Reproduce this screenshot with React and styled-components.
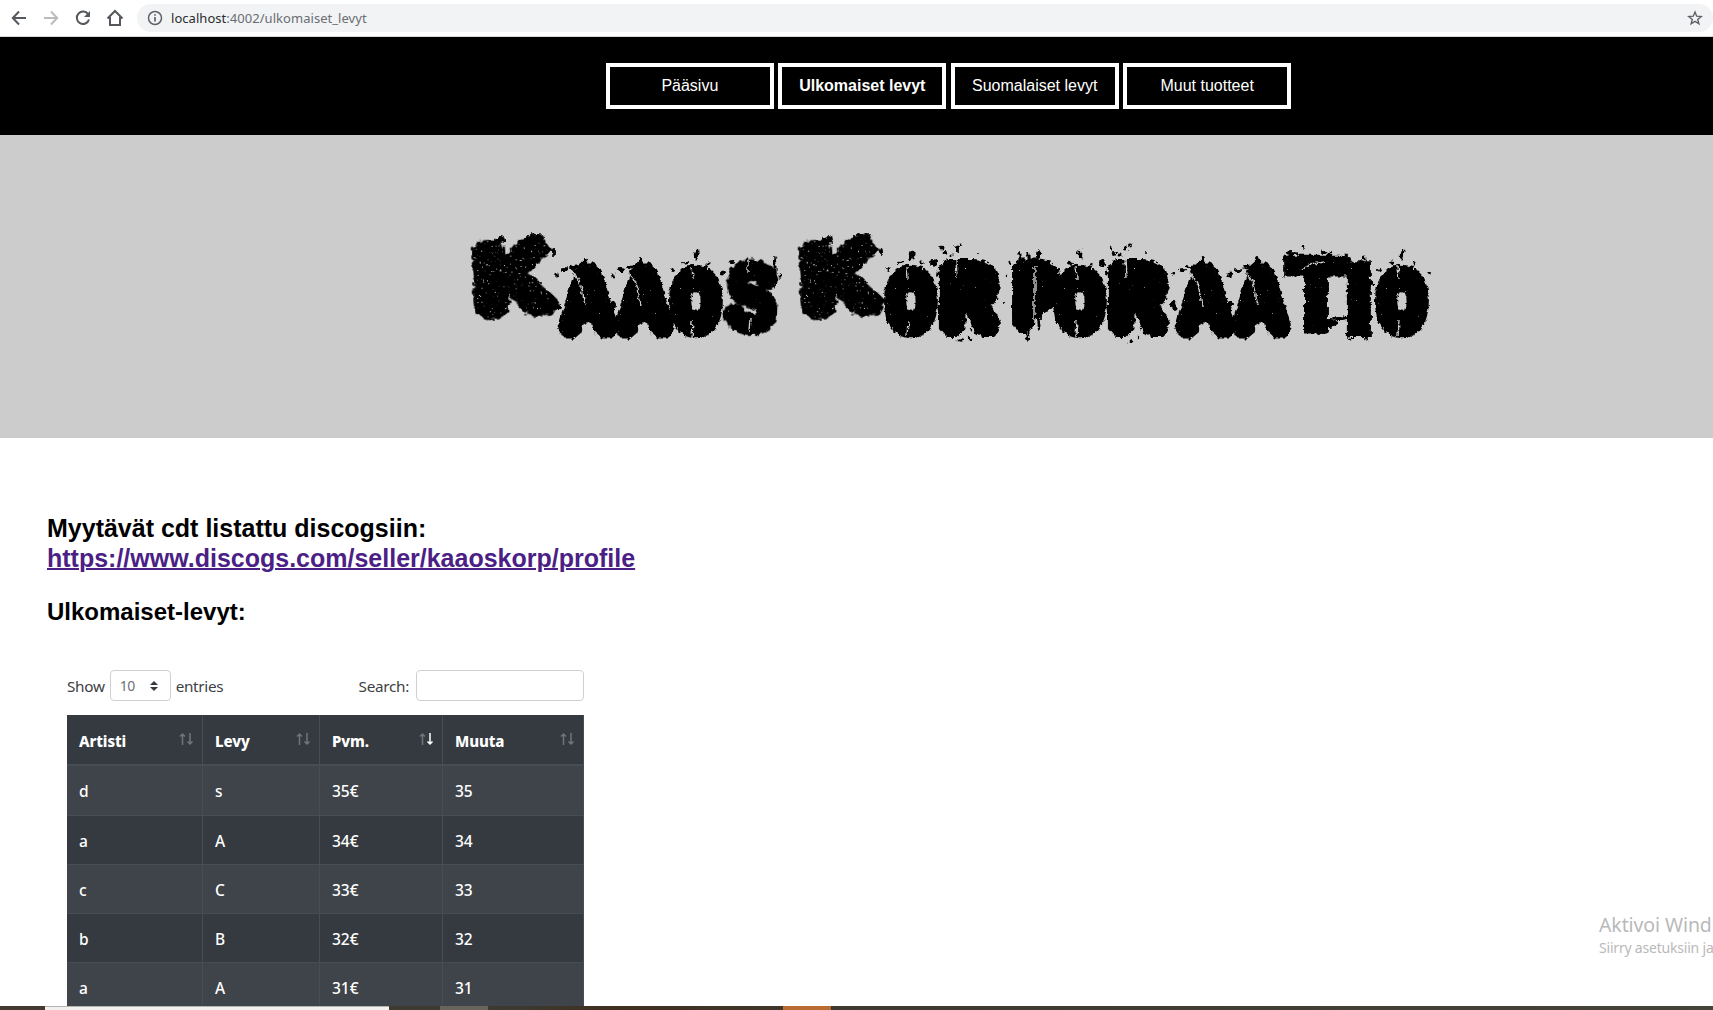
import React from "react";
import styled, { createGlobalStyle } from "styled-components";

const Global = createGlobalStyle`
  * { box-sizing: border-box; }
  html, body { margin: 0; background: #fff; overflow: hidden; }
`;

const sans = `"Noto Sans", "Open Sans", sans-serif`;
const arial = `"Liberation Sans", Arial, sans-serif`;

const Screen = styled.div`
  position: relative;
  display: flex;
  flex-direction: column;
  width: 1713px;
  height: 1010px;
  overflow: hidden;
  background: #fff;
`;

const Toolbar = styled.header`
  display: flex;
  align-items: center;
  flex: none;
  height: 37px;
  padding: 0 0 1px 7px;
  border-bottom: 1px solid #d5d7d9;
`;

const ToolButton = styled.span`
  display: flex;
  justify-content: center;
  flex: none;
  width: 24px;
  margin-right: 8px;
  color: ${(p) => (p.$off ? "#b9bbbd" : "#55585c")};
  svg { display: block; }
`;

const AddressBar = styled.div`
  display: flex;
  align-items: center;
  flex: 1;
  height: 28px;
  margin-left: 2px;
  padding: 0 10px;
  border-radius: 14px;
  background: #f1f3f4;
  color: #5f6368;
`;

const Url = styled.span`
  flex: 1;
  margin-left: 8px;
  font: 13px ${sans};
  letter-spacing: 0.04px;
  color: #6a6e73;
  b { font-weight: 400; color: #2b2d30; }
`;

const Page = styled.div`
  flex: none;
  width: 1897px;
`;

const Nav = styled.nav`
  display: flex;
  align-items: center;
  justify-content: center;
  gap: 4.45px;
  height: 98px;
  background: #000;
`;

const NavItem = styled.a`
  display: flex;
  align-items: center;
  justify-content: center;
  width: 168px;
  height: 46px;
  border: 4px solid #fff;
  color: #fff;
  font: ${(p) => (p.$active ? 700 : 400)} 16px ${arial};
`;

const Banner = styled.div`
  display: flex;
  justify-content: center;
  height: 303px;
  padding-top: 85px;
  background: #ccc;
`;

const Main = styled.main`
  padding: 75px 0 0 47px;
`;

const Heading = styled.h2`
  margin: 0 0 ${(p) => p.$gap}px;
  font: 700 ${(p) => p.$size}px/30px ${arial};
  color: #000;
  a { color: #4b1f85; text-decoration: underline; text-decoration-thickness: 2px; }
`;

const TableBox = styled.section`
  display: flex;
  flex-direction: column;
  width: 517px;
  margin-left: 20px;
  font: 16px ${sans};
  color: #212529;
`;

const Controls = styled.div`
  display: flex;
  align-items: center;
  justify-content: space-between;
  height: 31px;
  margin-bottom: 14px;
`;

const Label = styled.label`
  display: flex;
  align-items: center;
  gap: ${(p) => p.$gap}px;
  font-size: 15.3px;
  letter-spacing: -0.3px;
  color: #3d4145;
`;

const Select = styled.span`
  display: flex;
  align-items: center;
  justify-content: space-between;
  width: 61px;
  height: 31px;
  padding: 0 12px 0 9px;
  border: 1px solid #ced1d4;
  border-radius: 4px;
  font-size: 14px;
  color: #6b7278;
`;

const SearchBox = styled.input`
  width: 168px;
  height: 31px;
  border: 1px solid #ced1d4;
  border-radius: 4px;
  background: #fff;
`;

const Row = styled.div`
  display: grid;
  grid-template-columns: 136px 117px 123px 141px;
  height: ${(p) => p.$h}px;
  border-bottom: ${(p) => (p.$head ? 2 : 1)}px solid #454d55;
  background: ${(p) => (p.$odd ? "#3f444a" : "#343a40")};
`;

const Cell = styled.div`
  display: flex;
  align-items: center;
  justify-content: space-between;
  padding: ${(p) => (p.$head ? 2 : 1)}px 8px 0 12px;
  border-right: 1px solid #454d55;
  font-size: ${(p) => (p.$head ? 15 : 15.5)}px;
  font-weight: ${(p) => (p.$head ? 800 : 500)};
  letter-spacing: ${(p) => (p.$head ? -0.1 : 0)}px;
  color: #fff;
  svg { margin-bottom: 4px; }
`;

const Watermark = styled.aside`
  position: absolute;
  left: 1599px;
  top: 912px;
  white-space: nowrap;
  color: #b9b9b9;
  font-family: ${sans};
`;

const WatermarkTitle = styled.div`
  font-size: 19.5px;
  line-height: 26px;
  letter-spacing: -0.1px;
`;

const WatermarkText = styled.div`
  font-size: 14px;
  line-height: 20px;
  letter-spacing: -0.2px;
`;

const Taskbar = styled.footer`
  position: absolute;
  left: 0;
  bottom: 0;
  display: flex;
  width: 100%;
  height: 4px;
  padding-left: 45px;
  background: linear-gradient(90deg, #453a30, #3c3a30 30%, #40301f 36%, #3f392f 50%, #45443a);
`;

const Task = styled.span`
  flex: none;
  width: ${(p) => p.$w}px;
  margin-right: ${(p) => p.$gap || 0}px;
  background: ${(p) => p.$bg};
  border-top: ${(p) => (p.$line ? "1px solid #b4b4b0" : "none")};
`;

// Horizontal ink range of each bold capital, in percent of the font size.
const INK = {
  K: [6.7, 71.8], A: [1, 71.2], O: [4.1, 73.7], S: [3.1, 62.8],
  R: [6.7, 71], P: [6.7, 62.2], T: [2, 59], I: [6.7, 21.1],
};

// character, left, top, width, height, stroke, rotation
const KAAOS = [
  ["K", 14, 18, 86, 80, 19, -4],
  ["A", 97, 43, 64, 75, 20, 0],
  ["A", 153, 43, 64, 75, 20, 0],
  ["O", 210, 44, 54, 74, 24, 0],
  ["S", 265, 39, 54, 76, 14, 3],
];
const KORPORAATIO = [
  ["K", 341, 18, 86, 80, 19, -4],
  ["O", 425, 44, 54, 74, 24, 0],
  ["R", 480, 39, 64, 78, 21, 0],
  ["P", 553, 39, 48, 74, 24, 0],
  ["O", 594, 44, 54, 74, 24, 0],
  ["R", 649, 39, 64, 78, 21, 0],
  ["A", 714, 43, 64, 75, 20, 0],
  ["A", 770, 43, 64, 75, 20, 0],
  ["T", 825, 35, 64, 78, 11, 0],
  ["I", 888, 42, 24, 75, 8, 0],
  ["O", 916, 44, 54, 74, 24, 0],
];

const Glyph = ({ g: [ch, x, y, w, h, st, rot] }) => {
  const [a, b] = INK[ch];
  const round = ch === "O" || ch === "S" ? 2 : 0;
  const sx = w / (b - a + st);
  const sy = h / (68.8 + round + st);
  return (
    <text
      transform={`rotate(${rot} ${x + w / 2} ${y + h / 2}) translate(${x - (a - st / 2) * sx} ${y + h - (st / 2 + round / 2) * sy}) scale(${sx} ${sy})`}
      fontFamily="Liberation Sans, Arial, sans-serif"
      fontWeight="700"
      fontSize="100"
      fill="#000"
      stroke="#000"
      strokeWidth={st}
      strokeLinejoin={ch === "T" || ch === "I" ? "miter" : "bevel"}
      filter={ch === "K" ? "url(#worn)" : "url(#rough)"}
    >
      {ch}
    </text>
  );
};

// Ink drops that fly off each kind of letter: x, y offsets and radii.
const DROPS = {
  K: [[60, -2, 3, 2], [54, 2, 2, 3], [66, -1, 4, 2], [45, 26, 1, 1], [58, 24, 1, 1], [57, 31, 1, 1], [68, 45, 1, 1], [27, 2, 5, 4], [81, 14, 2, 4]],
  A: [[29, -1, 2.2, 5], [1, 12, 1.8, 2.6], [48, 21, 1.2, 1], [1, 43, 3, 5], [9, 7, 4, 2], [22, 4, 9, 2.5]],
  O: [[27, -9, 2.2, 4.5], [28, -12, 1.6, 2.6], [17, -1, 3, 1.5], [39, -1, 1.6, 1.4], [54, 9, 2, 2.5], [4, 6, 2, 2]],
  S: [[51, 13, 1.6, 16], [56, 17, 1.4, 3], [8, 3, 3, 2]],
  R: [[3, -11, 1.5, 2.5], [6, -6, 2.4, 2], [12, -4, 1.5, 1.5], [18, -10, 2, 3.5], [22, -14, 2, 1.4], [39, -6, 1, 1], [-6, 4, 3, 4], [22, 82, 2.4, 1.8], [32, 70, 1.2, 1.6], [30, 79, 1.2, 1.2]],
  P: [[8, -2, 1.6, 5], [16, -2, 1.6, 5], [27, -3, 2, 7], [-3, 4, 1.5, 2.5], [-6, 16, 1.2, 1.2], [16, 75, 1.5, 6], [27, 55, 2, 16], [-8, 44, 1.2, 1]],
  T: [[19, -8, 2.5, 2], [8, -2, 6, 2], [40, -3, 3, 2], [47, -3, 2, 1.3], [37, 76, 8, 4], [46, 68, 8, 4], [55, 63, 7, 2]],
  I: [[3, -3, 2, 2], [17, -4, 2.4, 2.4], [24, 20, 2.2, 2.4], [19, 77, 2, 1.6], [2, 76, 2, 1.5]],
};

const CRACKS = {
  A: "M15 8q8 7 11 18l3 17",
  O: "M23 2l1 13M24 56l-1 17",
  R: "M17 0l1 18",
  P: "M23 6l0 28M22 34v28",
  S: "M24 2l0 12M27 58l-1 16",
  T: "M17 15q10-7 24-8",
};

const Logo = () => {
  const words = [KAAOS, KORPORAATIO];
  const all = [...KAAOS, ...KORPORAATIO];
  return (
    <svg width="980" height="130" viewBox="0 0 980 130" role="img" aria-label="Kaaos Korporaatio">
      <defs>
        {[["rough", -14, 12], ["worn", -14, 10.9]].map(([id, slope, cut]) => (
          <filter key={id} id={id} x="-20%" y="-20%" width="140%" height="140%" colorInterpolationFilters="sRGB">
            <feTurbulence type="fractalNoise" baseFrequency="0.17" numOctaves="3" seed="8" result="n" />
            <feDisplacementMap in="SourceGraphic" in2="n" scale="7" xChannelSelector="R" yChannelSelector="G" result="d" />
            <feTurbulence type="fractalNoise" baseFrequency="0.45" numOctaves="2" seed="3" />
            <feColorMatrix values={`0 0 0 0 0  0 0 0 0 0  0 0 0 0 0  0 0 0 ${slope} ${cut}`} result="holes" />
            <feComposite in="d" in2="holes" operator="in" />
          </filter>
        ))}
      </defs>
      {words.map((w, i) => (
        <g key={i}>{w.map((g, j) => <Glyph key={j} g={g} />)}</g>
      ))}
      <g filter="url(#rough)">
        {all.map(([ch, x, y], i) => (
          <g key={i} transform={`translate(${x} ${y})`}>
            {DROPS[ch].map(([cx, cy, rx, ry], j) => <ellipse key={j} cx={cx} cy={cy} rx={rx} ry={ry} />)}
            {CRACKS[ch] && <path d={CRACKS[ch]} fill="none" stroke="#ccc" strokeWidth="1.4" />}
          </g>
        ))}
      </g>
    </svg>
  );
};

const ink = { fill: "none", stroke: "currentColor", strokeWidth: 2 };

const SortIcon = ({ desc }) => (
  <svg width="16" height="14" viewBox="0 0 16 14" fill="none" stroke="#fff" strokeWidth="1.5">
    <path d="M4.500 13V2M2 4.500L4.500 2 7 4.500" opacity=".3" />
    <path d="M12 1v11M9.500 9.500L12 12l2.500-2.500" opacity={desc ? 1 : 0.3} />
  </svg>
);

const HEAD = ["Artisti", "Levy", "Pvm.", "Muuta"];
const ROWS = [
  ["d", "s", "35€", "35"],
  ["a", "A", "34€", "34"],
  ["c", "C", "33€", "33"],
  ["b", "B", "32€", "32"],
  ["a", "A", "31€", "31"],
];

export default function App() {
  return (
    <Screen>
      <Global />
      <Toolbar>
        <ToolButton>
          <svg width="16" height="16" viewBox="0 0 16 16" {...ink}><path d="M15 8H2M8 1.500L1.800 8 8 14.500" /></svg>
        </ToolButton>
        <ToolButton $off>
          <svg width="16" height="16" viewBox="0 0 16 16" {...ink}><path d="M1 8h13M8 1.500L14.200 8 8 14.500" /></svg>
        </ToolButton>
        <ToolButton>
          <svg width="16" height="16" viewBox="0 0 16 16" {...ink}><path d="M13.300 4.500A6.200 6.200 0 1 0 14 9.500" /><path d="M15 1v6H9z" fill="currentColor" stroke="none" /></svg>
        </ToolButton>
        <ToolButton>
          <svg width="18" height="18" viewBox="0 0 18 18" {...ink}><path d="M1.500 9.500L9 2l7.500 7.500M4 8v8h10V8" /></svg>
        </ToolButton>
        <AddressBar>
          <svg width="16" height="16" viewBox="0 0 16 16" fill="none" stroke="currentColor" strokeWidth="1.500"><circle cx="8" cy="8" r="6.500" /><path d="M8 7v4.500M8 4.200v1.600" strokeWidth="1.700" /></svg>
          <Url><b>localhost</b>:4002/ulkomaiset_levyt</Url>
          <svg width="16" height="16" viewBox="0 0 16 16" fill="none" stroke="currentColor" strokeWidth="1.400"><path d="M8 2l1.700 4.200 4.500.3-3.500 2.900 1.200 4.400L8 11.400l-3.900 2.400 1.200-4.400L1.800 6.500l4.500-.3z" /></svg>
        </AddressBar>
      </Toolbar>
      <Page>
        <Nav>
          <NavItem>Pääsivu</NavItem>
          <NavItem $active>Ulkomaiset levyt</NavItem>
          <NavItem>Suomalaiset levyt</NavItem>
          <NavItem>Muut tuotteet</NavItem>
        </Nav>
        <Banner><Logo /></Banner>
        <Main>
          <Heading $size={25} $gap={24}>
            Myytävät cdt listattu discogsiin:<br />
            <a>https://www.discogs.com/seller/kaaoskorp/profile</a>
          </Heading>
          <Heading $size={24} $gap={43}>Ulkomaiset-levyt:</Heading>
          <TableBox>
            <Controls>
              <Label $gap={5}>
                Show
                <Select>10<svg width="8" height="10" viewBox="0 0 8 10" fill="#343a40"><path d="M0 4l4-4 4 4zM0 6l4 4 4-4z" /></svg></Select>
                entries
              </Label>
              <Label $gap={7}>Search:<SearchBox /></Label>
            </Controls>
            <Row $head $h={51}>
              {HEAD.map((h, i) => <Cell key={h} $head>{h}<SortIcon desc={i === 2} /></Cell>)}
            </Row>
            {ROWS.map((r, i) => (
              <Row key={i} $odd={i % 2 === 0} $h={i ? 49 : 50}>{r.map((c, j) => <Cell key={j}>{c}</Cell>)}</Row>
            ))}
          </TableBox>
        </Main>
      </Page>
      <Watermark>
        <WatermarkTitle>Aktivoi Wind</WatermarkTitle>
        <WatermarkText>Siirry asetuksiin ja</WatermarkText>
      </Watermark>
      <Taskbar>
        <Task $w={344} $gap={51} $bg="#f1f1f0" $line />
        <Task $w={48} $gap={295} $bg="#68645b" />
        <Task $w={48} $bg="#b96c31" />
      </Taskbar>
    </Screen>
  );
}
